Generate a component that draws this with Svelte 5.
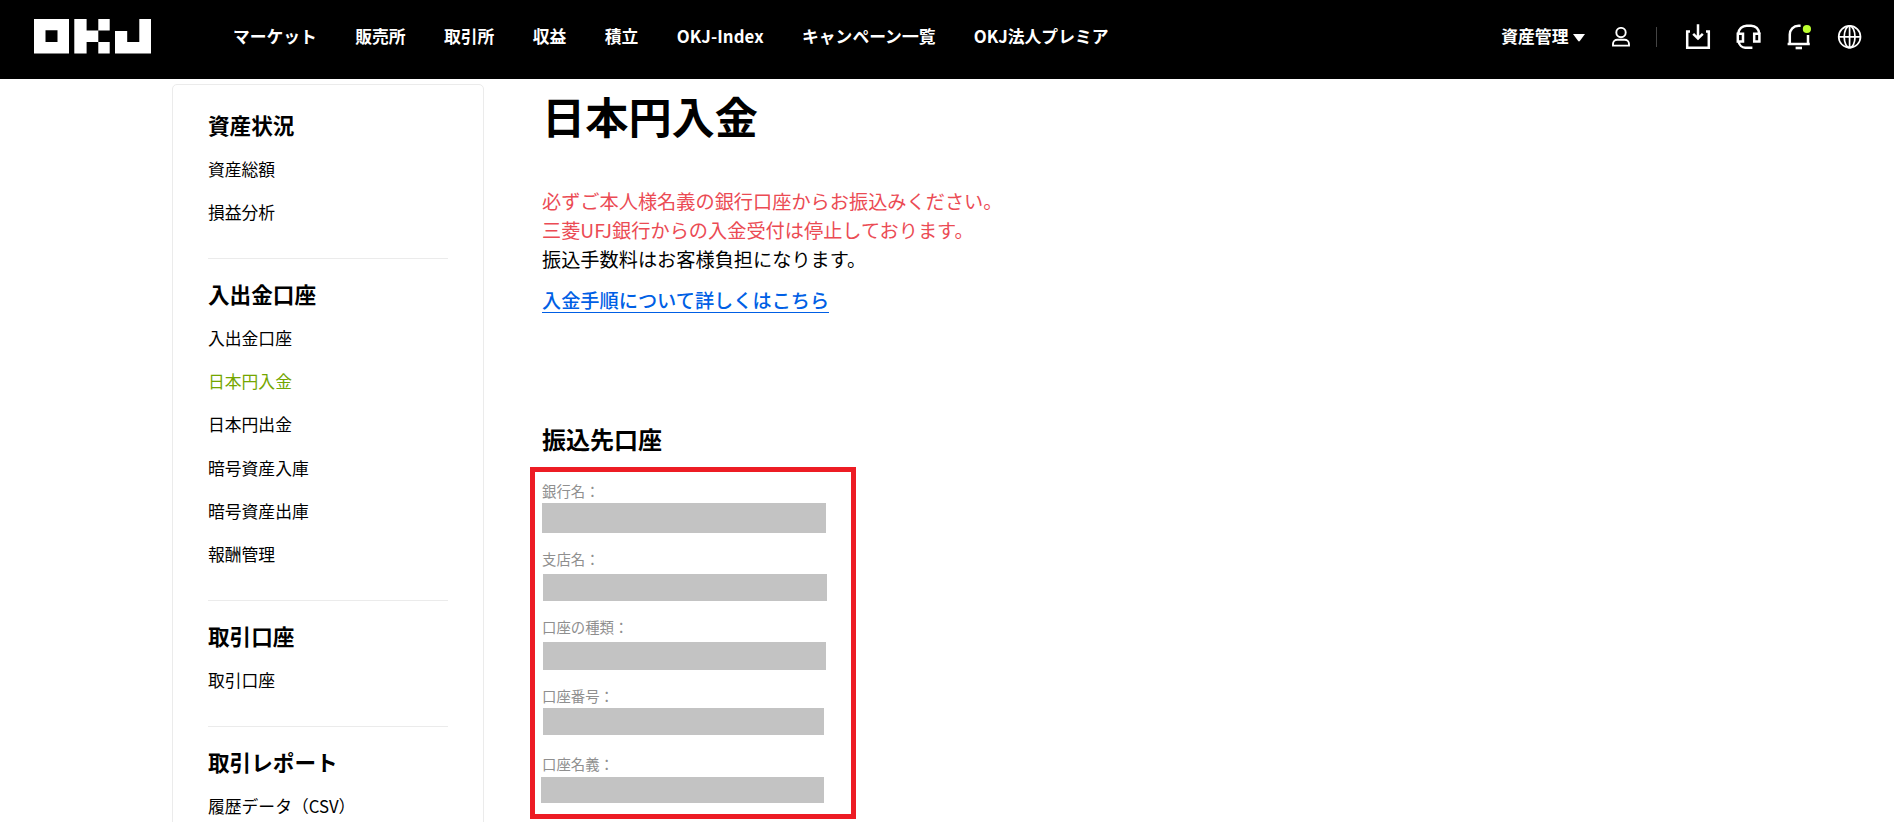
<script>
  const nav = ['マーケット', '販売所', '取引所', '収益', '積立', 'OKJ-Index', 'キャンペーン一覧', 'OKJ法人プレミア'];
  const groups = [
    { title: '資産状況', items: ['資産総額', '損益分析'] },
    { title: '入出金口座', items: ['入出金口座', '日本円入金', '日本円出金', '暗号資産入庫', '暗号資産出庫', '報酬管理'] },
    { title: '取引口座', items: ['取引口座'] },
    { title: '取引レポート', items: ['履歴データ（CSV）'] }
  ];
  const current = '日本円入金';
  // h: row height, gap: label to value, x/w/bh: masked value block
  const fields = [
    { label: '銀行名：', h: 68, gap: 1, x: 1, w: 284, bh: 30 },
    { label: '支店名：', h: 68, gap: 4, x: 2, w: 284, bh: 27 },
    { label: '口座の種類：', h: 69, gap: 4, x: 2, w: 283, bh: 28 },
    { label: '口座番号：', h: 68, gap: 1, x: 2, w: 281, bh: 27 },
    { label: '口座名義：', h: 61, gap: 2, x: 0, w: 283, bh: 26 }
  ];
</script>

<header>
  <svg class="logo" width="117" height="35" viewBox="0 0 117 35" fill="#fff">
    <path fill-rule="evenodd" d="M0 0H35V34.5H0ZM11.5 11.3V23H23.5V11.3Z" />
    <path d="M40.3 0H52.6V11.5H64.3V23H52.6V34.5H40.3ZM64.3 0H75.7V11.5H64.3ZM64.3 23H75.7V34.5H64.3Z" />
    <path d="M81 12H93.2V23H105.3V0H117V34.5H81Z" />
  </svg>
  <nav>
    {#each nav as n}<a class:latin={n === 'OKJ-Index'}>{n}</a>{/each}
  </nav>
  <div class="tools">
    <span class="assets">資産管理</span>
    <svg class="caret" width="12" height="8" viewBox="0 0 12 8" fill="#fff"><path d="M0 0H12L7 6.8Q6 8 5 6.8Z" /></svg>
    <svg class="user" width="18" height="20" viewBox="0 0 18 20" fill="none" stroke="#fff" stroke-width="1.9">
      <circle cx="9" cy="5.6" r="4.7" />
      <path d="M1 18.6V17C1 14.6 3 12.8 5.4 12.8H12.6C15 12.8 17 14.6 17 17V18.6Z" />
    </svg>
    <i class="sep"></i>
    <svg class="ic" width="26" height="26" viewBox="0 0 26 26" fill="none" stroke="#fff" stroke-width="2.5">
      <path d="M5 7.6H2.2V23.8H23.8V7.6H21" />
      <path d="M13 0.2V14M8.2 9.8L13 14.6L17.8 9.8" />
    </svg>
    <svg class="ic" width="26" height="26" viewBox="0 0 26 26" fill="none" stroke="#fff" stroke-width="2.5">
      <path d="M2.2 9.8C2.6 5 6.4 1.7 10.6 1.7H15.1C19.6 1.7 23 5 23.2 9.8" />
      <path d="M1.8 9.8H7V17.6H1.8ZM18.2 9.8H23.4V17.6H18.2Z" />
      <path d="M2.6 17.6C3.2 21 6.1 23.6 9.2 23.8H16.4" />
    </svg>
    <svg class="ic" width="26" height="26" viewBox="0 0 26 26" fill="none" stroke="#fff" stroke-width="2.5">
      <path d="M14.6 1.7H12.6C7.4 1.7 3.8 5.6 3.8 10.5V19.6M22 11V19.6M1.6 20H23.8" />
      <path d="M9.6 24H16" stroke-width="2.6" />
      <circle cx="20.9" cy="5" r="4.1" fill="#bcff2f" stroke="none" />
    </svg>
    <svg class="ic" width="26" height="26" viewBox="0 0 26 26" fill="none" stroke="#fff" stroke-width="1.7">
      <circle cx="12.6" cy="12.8" r="10.9" />
      <ellipse cx="12.6" cy="12.8" rx="5.4" ry="10.9" />
      <path d="M12.6 2V23.6M1.6 12.8H23.6" />
    </svg>
  </div>
</header>

<div class="page">
  <aside>
    {#each groups as g}
      <section>
        <h3>{g.title}</h3>
        <ul>
          {#each g.items as item}<li class:active={item === current}>{item}</li>{/each}
        </ul>
      </section>
    {/each}
  </aside>
  <main>
    <h1>日本円入金</h1>
    <p class="warn">必ずご本人様名義の銀行口座からお振込みください。</p>
    <p class="warn">三菱UFJ銀行からの入金受付は停止しております。</p>
    <p>振込手数料はお客様負担になります。</p>
    <a class="guide">入金手順について詳しくはこちら</a>
    <h2>振込先口座</h2>
    <div class="account">
      {#each fields as f}
        <div class="field" style="height:{f.h}px">
          <span>{f.label}</span>
          <b style="margin:{f.gap}px 0 0 {f.x}px;width:{f.w}px;height:{f.bh}px"></b>
        </div>
      {/each}
    </div>
  </main>
</div>

<style>
  :global(body) {
    margin: 0;
    background: #fff;
    color: #000;
    font-family: 'Noto Sans CJK JP', 'Noto Sans', sans-serif;
    overflow: hidden;
  }
  h1, h2, h3, p, ul { margin: 0; padding: 0; }
  header {
    display: flex;
    align-items: flex-start;
    box-sizing: border-box;
    height: 79px;
    padding: 0 31.5px 0 34px;
    background: #000;
    color: #fff;
    font-size: 16.8px;
    font-weight: 700;
    line-height: 24px;
    white-space: nowrap;
  }
  .logo { margin-top: 19px; flex: none; }
  nav { display: flex; gap: 38.4px; margin: 24px 0 0 81.9px; }
  .latin { width: 87px; letter-spacing: 0.1px; }
  .tools { display: flex; align-items: flex-start; margin-left: auto; }
  .tools svg { flex: none; }
  .assets { margin-top: 24px; }
  .caret { margin: 34px 0 0 4.6px; }
  .user { margin: 27px 0 0 27px; }
  .sep { width: 1px; height: 20px; margin: 27px 28.3px 0 26px; background: #444; }
  .ic { margin-top: 24px; }
  .ic + .ic { margin-left: 24.4px; }

  .page { display: flex; align-items: flex-start; height: 743px; overflow: hidden; padding-left: 172px; }
  aside {
    box-sizing: border-box;
    width: 312px;
    height: 800px;
    flex: none;
    margin-top: 5px;
    padding: 4.8px 35px 0;
    border: 1px solid #ebebeb;
    border-radius: 5px;
  }
  section { padding: 13.2px 0 24px; border-bottom: 1px solid #ebebeb; }
  h3 { margin-bottom: 1.5px; font-size: 21.6px; line-height: 43.2px; font-weight: 700; }
  li { list-style: none; font-size: 16.8px; line-height: 43.2px; white-space: nowrap; }
  .active { color: #74a600; }

  main { padding-left: 58px; }
  h1 { margin-top: 4px; font-size: 43.2px; line-height: 64px; font-weight: 700; }
  p { font-size: 19.2px; line-height: 28.8px; }
  h1 + p { margin-top: 40px; }
  .warn { color: #eb4b54; }
  .guide {
    display: block;
    width: 287px;
    margin-top: 14.6px;
    font-size: 19.2px;
    line-height: 24px;
    font-weight: 500;
    color: #005fe5;
    border-bottom: 1px solid #005fe5;
    white-space: nowrap;
  }
  h2 { margin-top: 108px; font-size: 24px; line-height: 36px; font-weight: 700; }
  .account {
    box-sizing: border-box;
    width: 326px;
    height: 352px;
    margin: 10px 0 0 -12px;
    padding: 8px 0 0 6px;
    border: 5px solid #ed1c24;
  }
  .field span { display: block; padding-left: 1px; font-size: 14.4px; line-height: 22px; color: #8f8f8f; }
  .field b { display: block; background: #c3c3c3; }
</style>
